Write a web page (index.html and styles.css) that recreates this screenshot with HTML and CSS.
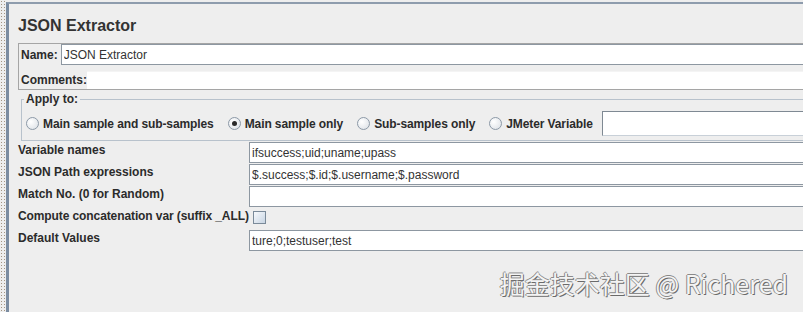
FILE: index.html
```html
<!DOCTYPE html>
<html>

<head>
    <link rel="stylesheet" href="styles.css">
</head>

<body>
    <div class="window">
        <div class="dots"></div>
        <div class="panel">
            <h1 class="title">JSON Extractor</h1>

            <!-- name and comments -->
            <div class="name-box">
                <div class="name-row">
                    <label>Name:</label>
                    <input class="field name-field" type="text" value="JSON Extractor">
                </div>
                <div class="comment-row">
                    <label>Comments:</label>
                    <input class="field comment-field" type="text">
                </div>
            </div>

            <!-- scope radios -->
            <fieldset class="apply">
                <legend>Apply to:</legend>
                <div class="radios">
                    <label class="radio"><span class="circle"></span>Main sample and sub-samples</label>
                    <label class="radio"><span class="circle checked"></span>Main sample only</label>
                    <label class="radio"><span class="circle"></span>Sub-samples only</label>
                    <label class="radio"><span class="circle"></span>JMeter Variable</label>
                    <input class="field var-field" type="text">
                </div>
            </fieldset>

            <!-- extractor settings -->
            <div class="props">
                <label>Variable names</label>
                <input class="field" type="text" value="ifsuccess;uid;uname;upass">
                <label>JSON Path expressions</label>
                <input class="field" type="text" value="$.success;$.id;$.username;$.password">
                <label>Match No. (0 for Random)</label>
                <input class="field" type="text">
                <label class="tight">Compute concatenation var (suffix _ALL)</label>
                <span class="check"></span>
                <label>Default Values</label>
                <input class="field" type="text" value="ture;0;testuser;test">
            </div>
        </div>
        <div class="watermark">掘金技术社区 @ Richered</div>
    </div>
</body>

</html>
```

FILE: styles.css
```css
body,
html {
    margin: 0;
    height: 100%;
    overflow: hidden;
}

body {
    background: #eeeeee;
    font-family: "Liberation Sans", Arial, sans-serif;
    font-size: 12px;
    color: #2b2b2b;
}

.window {
    display: flex;
    height: 312px;
    position: relative;
}

.dots {
    width: 6px;
    background-image: radial-gradient(circle, #a39584 0.7px, transparent 1px);
    background-size: 3px 3px;
}

.panel {
    flex: 1;
    min-width: 0;
    margin: 2px -12px 0 0;
    border-left: 3px solid #7b8ca1;
    border-top: 2px solid #8e9cad;
    padding-left: 9px;
}

.title {
    margin: 13px 0 0;
    font-size: 16px;
    line-height: 18px;
    font-weight: bold;
    color: #333333;
}

.field {
    box-sizing: border-box;
    flex: 1;
    min-width: 0;
    margin: 0;
    padding: 0 2px;
    font-family: "Liberation Sans", Arial, sans-serif;
    font-size: 12px;
    color: #333333;
    background: #ffffff;
    border: 1px solid #8d97a1;
    border-right: none;
    outline: none;
}

label {
    font-weight: bold;
    white-space: nowrap;
}

.name-box {
    margin-top: 8px;
    border: 1px solid #a5a5a5;
    padding-left: 2px;
}

.name-row {
    display: flex;
    align-items: center;
    gap: 3px;
    height: 21px;
}

.name-field {
    height: 21px;
}

.comment-row {
    display: flex;
    align-items: center;
    gap: 0;
    height: 18px;
    margin-top: 6px;
}

.comment-field {
    height: 18px;
    border: none;
    border-top: 1px solid #f4f4f4;
}

.apply {
    margin: 2px 0 0 3px;
    padding: 5px 0 4px 2px;
    border: 1px solid #b8c2cc;
    min-width: 0;
}

.apply legend {
    padding: 0 2px;
    font-weight: bold;
    line-height: 14px;
}

.radios {
    display: flex;
    align-items: center;
    gap: 14px;
    height: 25px;
    padding-left: 2px;
}

.radio {
    display: flex;
    align-items: center;
    gap: 4px;
    letter-spacing: -0.1px;
}

.circle {
    box-sizing: border-box;
    width: 13px;
    height: 13px;
    border-radius: 50%;
    border: 1px solid #8c99a7;
    background: radial-gradient(circle at 35% 35%, #ffffff, #d9dee4);
    display: flex;
    align-items: center;
    justify-content: center;
}

.circle.checked::after {
    content: "";
    width: 5px;
    height: 5px;
    border-radius: 50%;
    background: #2a2a2a;
}

.var-field {
    height: 25px;
    margin-left: -5px;
    border-color: #7f8993;
    border-bottom-color: #c8d0d8;
}

.props {
    display: grid;
    grid-template-columns: 231px 1fr;
    grid-auto-rows: 22px;
    align-items: start;
    margin-top: 1px;
}

.props label {
    line-height: 17px;
}

.props .field {
    height: 21px;
}

.tight {
    letter-spacing: -0.1px;
}

.check {
    box-sizing: border-box;
    width: 13px;
    height: 13px;
    margin: 3px 0 0 4px;
    border: 1px solid #7a8a99;
    background: linear-gradient(135deg, #f7f9fc, #c8d5e3);
}

.watermark {
    position: absolute;
    right: 15px;
    bottom: 16px;
    font-family: "Noto Sans CJK SC", "Noto Sans", sans-serif;
    font-size: 25px;
    line-height: 25px;
    color: #f4f4f4;
    text-shadow: -1px 0 #8a8a8a, 0 -1px #8a8a8a, 1px 1px #6a6a6a;
}
```
